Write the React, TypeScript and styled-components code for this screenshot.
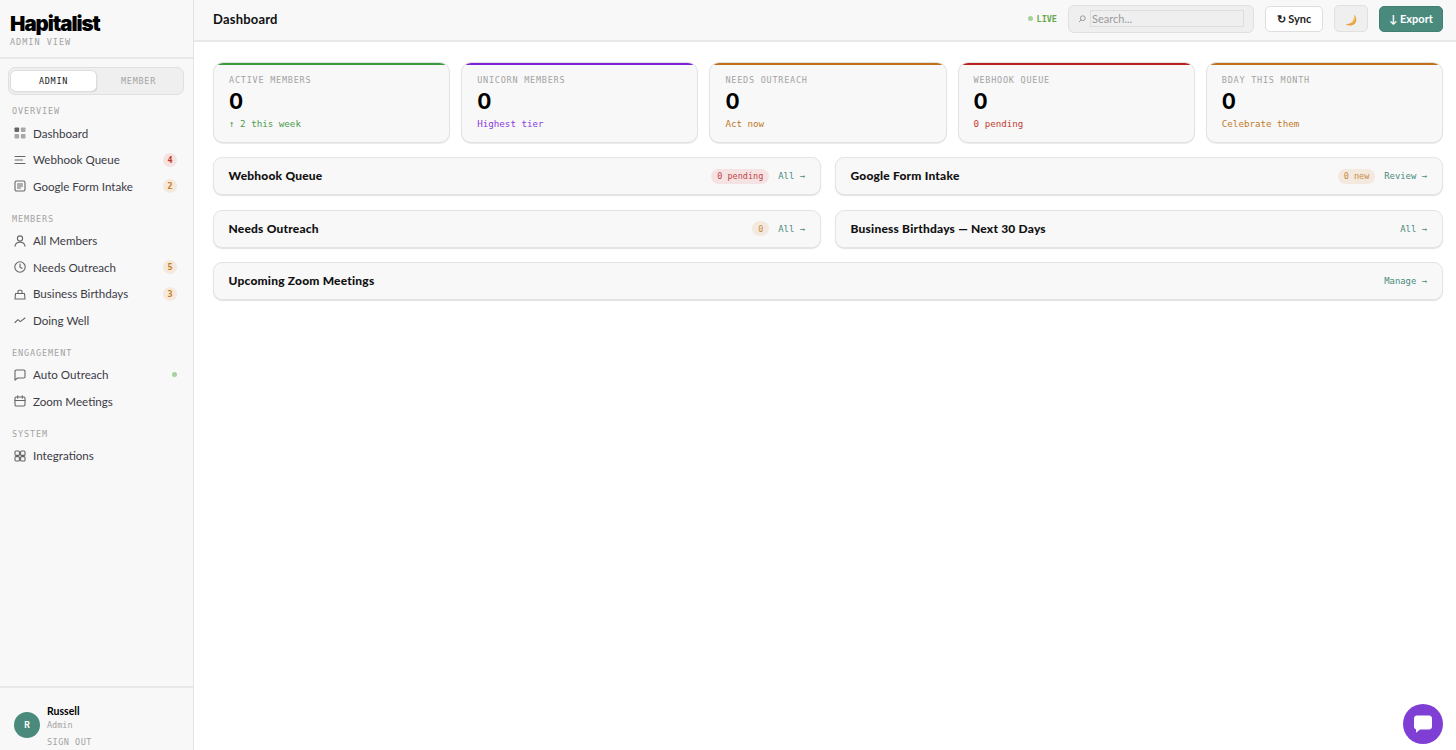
import React from "react";
import styled, { createGlobalStyle } from "styled-components";

const mono = `"DejaVu Sans Mono", "Liberation Mono", monospace`;
const sans = `Lato, "Noto Sans", sans-serif`;

const Global = createGlobalStyle`
  html, body { margin: 0; padding: 0; height: 100%; background: #fff; overflow: hidden; }
  #root { height: 100%; }
  * { box-sizing: border-box; }
`;

const Shell = styled.div`
  display: flex; height: 750px; width: 1456px; font-family: ${sans}; color: #111;
`;
const Sidebar = styled.aside`
  width: 194px; flex: none; display: flex; flex-direction: column;
  background: #f8f8f8; border-right: 1px solid #e4e4e4;
`;
const Brand = styled.div`
  height: 59px; padding: 11px 10px 0; border-bottom: 2px solid #e8e8e8;
`;
const Logo = styled.div`
  font-family: Inter, sans-serif; font-weight: 900; font-size: 20.5px; line-height: 25px;
  letter-spacing: -1px; color: #000;
`;
const Tagline = styled.div`
  font-family: ${mono}; font-size: 8.5px; line-height: 12px; letter-spacing: 1px; color: #a3a3a3;
`;
const Toggle = styled.div`
  margin: 8px 9px 0 8px; height: 28px; padding: 3px 2px; display: flex;
  background: #efefef; border: 1px solid #e0e0e0; border-radius: 7px;
`;
const ToggleBtn = styled.div<{ $on?: boolean }>`
  flex: 1; display: flex; align-items: center; justify-content: center; border-radius: 5px;
  font-family: ${mono}; font-size: 8.5px; letter-spacing: 0.7px;
  color: ${(p) => (p.$on ? "#1a1a1a" : "#a5a5a5")};
  background: ${(p) => (p.$on ? "#fff" : "transparent")};
  box-shadow: ${(p) => (p.$on ? "0 0 0 1px #ddd, 1px 1px 1px #bbb" : "none")};
`;
const Nav = styled.nav`
  flex: 1; display: flex; flex-direction: column; padding-top: 11px;
`;
const Section = styled.div<{ $gap?: number }>`
  font-family: ${mono}; font-size: 8.5px; line-height: 10px; letter-spacing: 0.9px; color: #a3a3a3;
  padding-left: 12px; margin-top: ${(p) => p.$gap ?? 0}px; margin-bottom: 4px;
`;
const Item = styled.div`
  height: 26.5px; display: flex; align-items: center; padding: 0 16px 0 14px; gap: 7px;
  font-size: 11.6px; color: #3c3c46;
`;
const IconBox = styled.span`
  width: 12px; height: 12px; flex: none; display: flex; color: #666;
`;
const ItemLabel = styled.span`
  flex: 1; white-space: nowrap;
`;
const Count = styled.span<{ $tone: "red" | "amber" }>`
  width: 14px; height: 14px; border-radius: 50%; display: flex; align-items: center; justify-content: center;
  font-family: ${mono}; font-weight: 700; font-size: 8.5px;
  color: ${(p) => (p.$tone === "red" ? "#c0392b" : "#c77f22")};
  background: ${(p) => (p.$tone === "red" ? "#f5e3e1" : "#f4e9dc")};
`;
const Dot = styled.span`
  width: 5px; height: 5px; border-radius: 50%; background: #a5d19f;
`;
const Footer = styled.div`
  height: 64px; border-top: 2px solid #e8e8e8; padding: 17px 0 0 14px; display: flex; gap: 7px;
`;
const Avatar = styled.div`
  width: 26px; height: 26px; flex: none; margin-top: 7px; border-radius: 50%; background: #4a8a7d; color: #fff;
  display: flex; align-items: center; justify-content: center; font: 700 8.5px Inter, sans-serif;
`;
const UserBlock = styled.div`
  display: flex; flex-direction: column;
`;
const UserName = styled.div`
  font-size: 10.5px; font-weight: 700; line-height: 13px; color: #000;
`;
const UserRole = styled.div`
  font-family: ${mono}; font-size: 8.5px; line-height: 12px; color: #a3a3a3; margin-top: 1px;
`;
const SignOut = styled.div`
  font-family: ${mono}; font-size: 8.5px; line-height: 10px; letter-spacing: 0.5px; color: #a3a3a3; margin-top: 6px;
`;

const Main = styled.main`
  flex: 1; min-width: 0; display: flex; flex-direction: column;
`;
const Header = styled.header`
  height: 42px; flex: none; background: #f8f8f8; border-bottom: 2px solid #e8e8e8;
  display: flex; align-items: center; padding: 0 13px 3px 19px;
`;
const Title = styled.h1`
  flex: 1; margin: 0; font-size: 13px; font-weight: 700; color: #111; letter-spacing: 0.2px;
`;
const Live = styled.div`
  display: flex; align-items: center; gap: 4px; font-family: ${mono}; font-size: 8.5px; font-weight: 700;
  color: #6aa84f; letter-spacing: 0; margin-right: 11px;
`;
const LiveDot = styled.span`
  width: 5px; height: 5px; border-radius: 50%; background: #a5d19f;
`;
const Search = styled.div`
  width: 186px; height: 28px; background: #efefef; border: 1px solid #e0e0e0; border-radius: 6px;
  display: flex; align-items: center; padding: 0 9px; gap: 4px; margin-right: 11px; color: #999;
`;
const SearchInput = styled.input`
  flex: 1; min-width: 0; height: 17px; background: #efefef; border: 1px solid #dcdcdc; padding: 0 1px;
  font-family: ${sans}; font-size: 11px; color: #777; outline: none;
  &::placeholder { color: #9a9a9a; opacity: 1; }
`;
const SyncBtn = styled.button`
  width: 58px; height: 26px; background: #fff; border: 1px solid #dedede; border-radius: 5px; padding: 0;
  font-family: ${sans}; font-size: 11px; font-weight: 700; color: #222; margin-right: 11px; white-space: nowrap;
`;
const ThemeBtn = styled.button`
  width: 34px; height: 27px; background: #efefef; border: 1px solid #e0e0e0; border-radius: 5px; padding: 3px 0 0;
  display: flex; align-items: center; justify-content: center; margin-right: 11px;
`;
const ExportBtn = styled.button`
  width: 64px; height: 26px; background: #4a8a7d; border: 1px solid #428074; border-radius: 5px; padding: 0;
  font-family: ${sans}; font-size: 11px; font-weight: 700; color: #fff; white-space: nowrap;
`;
const Content = styled.div`
  flex: 1; background: #fff; padding: 20px 13px 0 19px; display: flex; flex-direction: column;
`;
const Stats = styled.div`
  display: grid; grid-template-columns: repeat(5, 1fr); gap: 11px; margin-bottom: 14px;
`;
const Stat = styled.div<{ $c: string }>`
  position: relative; overflow: hidden;
  height: 81px; background: #f8f8f8; border: 1px solid #e2e2e2; border-radius: 10px;
  padding: 11px 15px 0;
  box-shadow: 0 1px 1px #eaeaea;
  &::before {
    content: ""; position: absolute; left: 0; right: 0; top: -1px; height: 2.5px; background: ${(p) => p.$c};
  }
`;
const StatLabel = styled.div`
  font-family: ${mono}; font-size: 8.5px; line-height: 12px; letter-spacing: 0.76px; color: #a3a3a3;
`;
const StatValue = styled.div`
  font-family: Inter, sans-serif; font-size: 21px; font-weight: 700; line-height: 24px; color: #000; margin-top: 4px;
`;
const StatNote = styled.div<{ $c: string }>`
  font-family: ${mono}; font-size: 9.2px; line-height: 12px; color: ${(p) => p.$c}; margin-top: 4px;
`;
const Panels = styled.div`
  display: grid; grid-template-columns: 1fr 1fr; column-gap: 14px; row-gap: 14.5px;
`;
const Panel = styled.section<{ $wide?: boolean }>`
  height: 38px; background: #f8f8f8; border: 1px solid #e4e4e4; border-radius: 9px;
  box-shadow: 0 1px 1px #e2e2e2; display: flex; align-items: center; padding: 0 15px 0 14.5px; gap: 9px;
  grid-column: ${(p) => (p.$wide ? "1 / -1" : "auto")};
`;
const PanelTitle = styled.h2`
  flex: 1; margin: 0 0 1px; font-size: 12px; font-weight: 900; color: #111; letter-spacing: 0.2px;
`;
const Pill = styled.span<{ $tone: "red" | "amber" }>`
  height: 15px; min-width: 15px; padding: 0 6px; border-radius: 8px; display: flex; align-items: center; justify-content: center;
  font-family: ${mono}; font-size: 8.5px;
  color: ${(p) => (p.$tone === "red" ? "#c0444a" : "#c98a45")};
  background: ${(p) => (p.$tone === "red" ? "#f5e3e3" : "#f4e9de")};
`;
const PanelLink = styled.span`
  font-family: ${mono}; font-size: 8.9px; color: #4a8a7d; white-space: nowrap;
`;
const Chat = styled.div`
  position: fixed; left: 1403px; top: 703.5px; width: 40px; height: 40px; border-radius: 50%;
  background: #7f3fd4; display: flex; align-items: center; justify-content: center;
`;

const S = { fill: "none", stroke: "currentColor", strokeWidth: 1.1, strokeLinecap: "round" as const, strokeLinejoin: "round" as const };
const Ic = ({ children }: { children: React.ReactNode }) => (
  <IconBox><svg width="12" height="12" viewBox="0 0 12 12" {...S}>{children}</svg></IconBox>
);
const icons: Record<string, React.ReactNode> = {
  dash: <Ic><g stroke="none" fill="currentColor"><rect x="0.5" y="0.5" width="4.6" height="4.6" rx="0.8" /><rect x="6.9" y="0.5" width="4.6" height="4.6" rx="0.8" opacity=".55" /><rect x="0.5" y="6.9" width="4.6" height="4.6" rx="0.8" opacity=".55" /><rect x="6.9" y="6.9" width="4.6" height="4.6" rx="0.8" opacity=".55" /></g></Ic>,
  queue: <Ic><path d="M1 2.5h10M1 6h7.5M1 9.5h10" /></Ic>,
  form: <Ic><rect x="1" y="1" width="10" height="10" rx="1.4" /><path d="M3.5 4h5M3.5 6h5M3.5 8h3" /></Ic>,
  user: <Ic><circle cx="6" cy="3.5" r="2.6" /><path d="M1 11.3c.3-2.7 2.3-4 5-4s4.7 1.3 5 4" /></Ic>,
  clock: <Ic><circle cx="6" cy="6" r="5.2" /><path d="M6 3v3.2l2 1.1" /></Ic>,
  gift: <Ic><path d="M1.5 5.5h9l.5 5.5H1zM4 5.500V3.200c0-.6.4-1 1-1h2c.6 0 1 .4 1 1v2.300" /></Ic>,
  trend: <Ic><path d="M1 8.5l3-2.8 2.3 1.900L11 4" /></Ic>,
  chat: <Ic><path d="M1 2.200c0-.7.5-1.200 1.200-1.200h7.600c.7 0 1.200.5 1.200 1.200v5.600c0 .7-.5 1.200-1.200 1.200H3.500L1 11.200z" /></Ic>,
  cal: <Ic><rect x="1" y="2" width="10" height="9" rx="1.2" /><path d="M1 5.5h10M3.7.8v2.300M8.3.8v2.300" /></Ic>,
  grid: <Ic><rect x="1" y="1" width="4.4" height="4.4" rx="1" /><rect x="6.6" y="1" width="4.4" height="4.4" rx="1" /><rect x="1" y="6.6" width="4.4" height="4.4" rx="1" /><rect x="6.6" y="6.6" width="4.4" height="4.4" rx="1" /></Ic>,
};

const NavItem = ({ icon, label, children }: { icon: string; label: string; children?: React.ReactNode }) => (
  <Item>{icons[icon]}<ItemLabel>{label}</ItemLabel>{children}</Item>
);

const stats = [
  { label: "ACTIVE MEMBERS", note: "↑ 2 this week", c: "#3f9a3f", nc: "#4f9a4f" },
  { label: "UNICORN MEMBERS", note: "Highest tier", c: "#7c22d8", nc: "#8a3be0" },
  { label: "NEEDS OUTREACH", note: "Act now", c: "#c0701a", nc: "#c27a28" },
  { label: "WEBHOOK QUEUE", note: "0 pending", c: "#bb2020", nc: "#c04030" },
  { label: "BDAY THIS MONTH", note: "Celebrate them", c: "#c0701a", nc: "#c27a28" },
];

export default function App() {
  return (
    <Shell>
      <Global />
      <Sidebar>
        <Brand>
          <Logo>Hapitalist</Logo>
          <Tagline>ADMIN VIEW</Tagline>
        </Brand>
        <Toggle>
          <ToggleBtn $on>ADMIN</ToggleBtn>
          <ToggleBtn>MEMBER</ToggleBtn>
        </Toggle>
        <Nav>
          <Section>OVERVIEW</Section>
          <NavItem icon="dash" label="Dashboard" />
          <NavItem icon="queue" label="Webhook Queue"><Count $tone="red">4</Count></NavItem>
          <NavItem icon="form" label="Google Form Intake"><Count $tone="amber">2</Count></NavItem>
          <Section $gap={14}>MEMBERS</Section>
          <NavItem icon="user" label="All Members" />
          <NavItem icon="clock" label="Needs Outreach"><Count $tone="amber">5</Count></NavItem>
          <NavItem icon="gift" label="Business Birthdays"><Count $tone="amber">3</Count></NavItem>
          <NavItem icon="trend" label="Doing Well" />
          <Section $gap={14}>ENGAGEMENT</Section>
          <NavItem icon="chat" label="Auto Outreach"><Dot /></NavItem>
          <NavItem icon="cal" label="Zoom Meetings" />
          <Section $gap={14}>SYSTEM</Section>
          <NavItem icon="grid" label="Integrations" />
        </Nav>
        <Footer>
          <Avatar>R</Avatar>
          <UserBlock>
            <UserName>Russell</UserName>
            <UserRole>Admin</UserRole>
            <SignOut>SIGN OUT</SignOut>
          </UserBlock>
        </Footer>
      </Sidebar>
      <Main>
        <Header>
          <Title>Dashboard</Title>
          <Live><LiveDot />LIVE</Live>
          <Search>
            <svg width="8" height="8" viewBox="0 0 8 8" fill="none" stroke="#999" strokeWidth="1"><circle cx="4.8" cy="3.2" r="2.4" /><path d="M3 5L1 7" /></svg>
            <SearchInput placeholder="Search..." />
          </Search>
          <SyncBtn>↻ Sync</SyncBtn>
          <ThemeBtn>
            <svg width="13" height="13" viewBox="0 0 13 13"><path d="M9 .8c2.6 2 3 5.500 1.500 8-1.600 2.600-5 3.500-8 2.300-.8-.3-1.300-.7-1.500-1.200 2.500.5 5-.2 6.500-2.300C8.800 5.500 9.300 3 9 .8z" fill="#e8a33d" /><path d="M9 .8c.9.7 1.400 2 1.300 3.500C10 7 8 9.500 4.500 10.400 6 9.900 7.500 8.900 8.500 7 9.300 5.200 9.400 3 9 .8z" fill="#f5c76e" /></svg>
          </ThemeBtn>
          <ExportBtn>↓ Export</ExportBtn>
        </Header>
        <Content>
          <Stats>
            {stats.map((s) => (
              <Stat key={s.label} $c={s.c}>
                <StatLabel>{s.label}</StatLabel>
                <StatValue>0</StatValue>
                <StatNote $c={s.nc}>{s.note}</StatNote>
              </Stat>
            ))}
          </Stats>
          <Panels>
            <Panel><PanelTitle>Webhook Queue</PanelTitle><Pill $tone="red">0 pending</Pill><PanelLink>All →</PanelLink></Panel>
            <Panel><PanelTitle>Google Form Intake</PanelTitle><Pill $tone="amber">0 new</Pill><PanelLink>Review →</PanelLink></Panel>
            <Panel><PanelTitle>Needs Outreach</PanelTitle><Pill $tone="amber">0</Pill><PanelLink>All →</PanelLink></Panel>
            <Panel><PanelTitle>Business Birthdays — Next 30 Days</PanelTitle><PanelLink>All →</PanelLink></Panel>
            <Panel $wide><PanelTitle>Upcoming Zoom Meetings</PanelTitle><PanelLink>Manage →</PanelLink></Panel>
          </Panels>
        </Content>
      </Main>
      <Chat>
        <svg width="22" height="22" viewBox="0 0 22 22"><path d="M5 2.5h12c1.700 0 3 1.300 3 3v8c0 1.700-1.300 3-3 3H8l-4 3.300v-3.500C2.800 16 2 14.900 2 13.500v-8c0-1.700 1.300-3 3-3z" fill="#fff" /></svg>
      </Chat>
    </Shell>
  );
}
